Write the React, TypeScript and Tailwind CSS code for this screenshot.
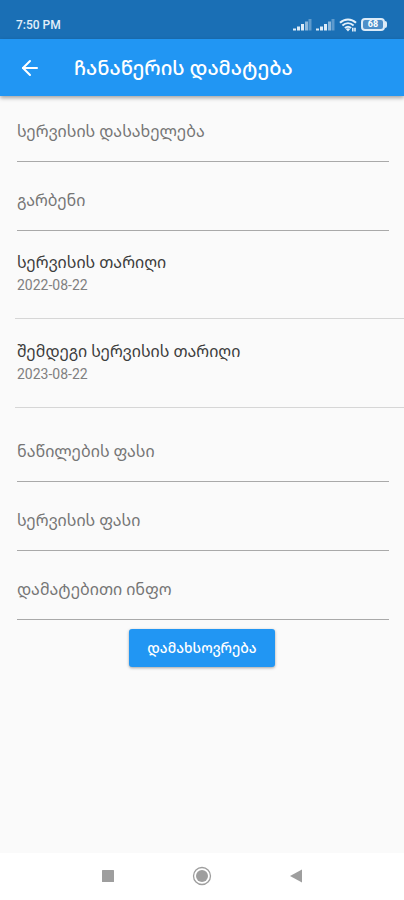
import { ArrowLeft } from "lucide-react";

type FieldProps = {
  name: string;
  label: string;
};

type DateRowProps = {
  label: string;
  value: string;
};

const Field = ({ name, label }: FieldProps) => (
  <input
    id={name}
    name={name}
    type="text"
    placeholder={label}
    aria-label={label}
    className="block h-[60px] w-full border-b border-[#a9a9a9] bg-transparent text-base text-black/85 outline-none placeholder:text-[#757575] focus:border-[#2196f3]"
  />
);

const DateRow = ({ label, value }: DateRowProps) => (
  <button
    type="button"
    className="flex h-[88px] flex-col items-start justify-center border-b border-[#d6d6d6] pb-px pl-[2px] text-left"
  >
    <span className="text-base leading-[22px] text-[#3c3c3c]">{label}</span>
    <span className="text-sm leading-[22px] text-[#808080]">{value}</span>
  </button>
);

const Signal = () => (
  <svg viewBox="0 0 19 13" className="h-[13px] w-[19px]" fill="#dcebf8" aria-hidden="true">
    <rect x="0" y="10.500" width="3" height="2" />
    <rect x="4" y="8.500" width="3" height="4" />
    <rect x="8" y="6" width="3" height="6.500" />
    <rect x="12" y="3.500" width="3" height="9" opacity="0.6" />
    <rect x="15.500" y="1" width="3" height="11.500" opacity="0.35" />
  </svg>
);

const Wifi = () => (
  <svg viewBox="0 0 18 14" className="h-[14px] w-[18px]" fill="none" aria-hidden="true">
    <g stroke="#e3f0fa" strokeWidth="2">
      <path d="M1 4.800C5.600.4 12.400.4 17 4.800" />
      <path d="M3.400 7.500c3.300-3 7.900-3 11.200 0" />
      <path d="M5.900 10.100c1.800-1.600 4.400-1.600 6.200 0" />
    </g>
    <path d="M6.800 11.100 9 13.600l2.200-2.500c-1.300-1-3.100-1-4.400 0z" fill="#e3f0fa" />
    <path d="M13.800 9.800v3.700M16 9.800v3.700" stroke="#e3f0fa" strokeWidth="1.600" />
  </svg>
);

const Battery = () => (
  <div className="flex items-center">
    <div className="flex h-[13px] w-6 items-center justify-center rounded-[4px] border-2 border-[#dcebf8] bg-[#4d8fc9]">
      <span className="text-[9px] leading-none font-bold text-white">68</span>
    </div>
    <div className="h-[7px] w-[2px] rounded-r-sm bg-[#dcebf8]" />
  </div>
);

export default function App() {
  return (
    <div className="flex min-h-screen flex-col bg-[#fafafa] font-[Roboto,'Noto_Sans_Georgian','Noto_Sans','DejaVu_Sans',sans-serif]">
      <div className="flex h-[39px] items-center justify-between bg-[#1a6fb5] pt-[10px] pr-[17px] pl-4">
        <span className="text-xs font-medium text-[#e3f0fa]">7:50 PM</span>
        <div className="flex items-center gap-1">
          <Signal />
          <Signal />
          <Wifi />
          <Battery />
        </div>
      </div>

      <header className="flex h-[57px] items-center bg-[#2196f3] pl-[18px] text-white shadow-[0_2px_4px_rgba(0,0,0,0.35)]">
        <button type="button" aria-label="უკან" className="mr-8">
          <ArrowLeft className="h-6 w-6" />
        </button>
        <h1 className="text-xl font-medium whitespace-nowrap">ჩანაწერის დამატება</h1>
      </header>

      <form className="flex flex-1 flex-col pt-[6px]">
        <div className="flex flex-col gap-[9px] pr-[15px] pl-[17px]">
          <Field name="title" label="სერვისის დასახელება" />
          <Field name="mileage" label="გარბენი" />
        </div>

        <div className="flex flex-col gap-px pl-[15px]">
          <DateRow label="სერვისის თარიღი" value="2022-08-22" />
          <DateRow label="შემდეგი სერვისის თარიღი" value="2023-08-22" />
        </div>

        <div className="flex flex-col gap-[9px] pt-[14px] pr-[15px] pl-[17px]">
          <Field name="partsPrice" label="ნაწილების ფასი" />
          <Field name="servicePrice" label="სერვისის ფასი" />
          <Field name="info" label="დამატებითი ინფო" />
        </div>

        <button
          type="button"
          className="mt-[9px] h-[38px] self-center rounded-[3px] bg-[#2196f3] px-[18px] text-sm font-medium text-white shadow-[0_1px_3px_rgba(0,0,0,0.35)]"
        >
          დამახსოვრება
        </button>
      </form>

      <nav className="flex h-[47px] items-center justify-center gap-[77px] bg-white pb-[2px]">
        <button type="button" aria-label="Recent apps">
          <svg viewBox="0 0 14 14" className="h-[14px] w-[14px]" fill="#9e9e9e">
            <rect x="1" y="1" width="12" height="12" rx="0.5" />
          </svg>
        </button>
        <button type="button" aria-label="Home">
          <svg viewBox="0 0 20 20" className="h-5 w-5">
            <circle cx="10" cy="10" r="8.500" fill="none" stroke="#9e9e9e" strokeWidth="1.300" />
            <circle cx="10" cy="10" r="6" fill="#9e9e9e" />
          </svg>
        </button>
        <button type="button" aria-label="Back">
          <svg viewBox="0 0 14 14" className="h-[14px] w-[14px]" fill="#9e9e9e">
            <path d="M1 7 13 .5v13z" />
          </svg>
        </button>
      </nav>
    </div>
  );
}
